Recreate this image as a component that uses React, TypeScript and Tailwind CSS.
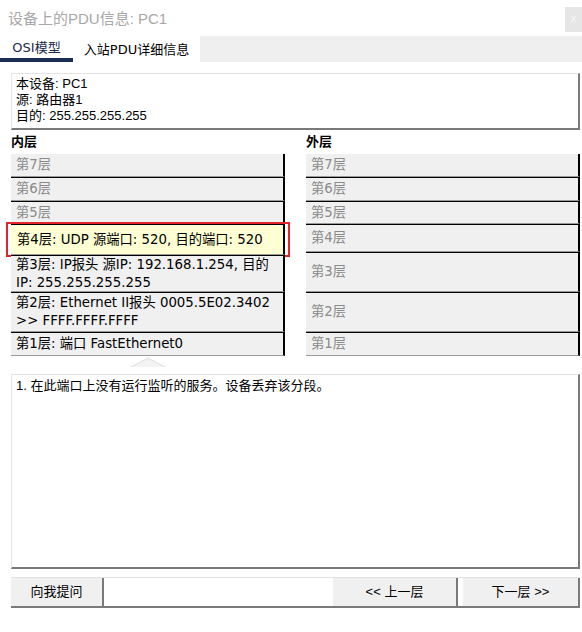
import React from "react";

const cjk = "font-['DejaVu_Sans','Noto_Sans_CJK_SC',sans-serif]";
const arialCjk = "font-['Liberation_Sans','Noto_Sans_CJK_SC',sans-serif]";

interface ILayer {
  label: string;
  h: string;
  active?: boolean;
  first?: boolean;
  highlight?: boolean;
}

const innerLayers: ILayer[] = [
  { label: "第7层", h: "h-[23px]", first: true },
  { label: "第6层", h: "h-[24px]" },
  { label: "第5层", h: "h-[23px]" },
  { label: "第4层: UDP 源端口: 520, 目的端口: 520", h: "h-[31px]", active: true, highlight: true },
  { label: "第3层: IP报头 源IP: 192.168.1.254, 目的 IP: 255.255.255.255", h: "h-[37px]", active: true },
  { label: "第2层: Ethernet II报头 0005.5E02.3402 >> FFFF.FFFF.FFFF", h: "h-[40px]", active: true },
  { label: "第1层: 端口 FastEthernet0", h: "h-[24px]", active: true },
];

const outerLayers: ILayer[] = [
  { label: "第7层", h: "h-[23px]", first: true },
  { label: "第6层", h: "h-[24px]" },
  { label: "第5层", h: "h-[23px]" },
  { label: "第4层", h: "h-[28px]" },
  { label: "第3层", h: "h-[40px]" },
  { label: "第2层", h: "h-[40px]" },
  { label: "第1层", h: "h-[24px]" },
];

const LayerRow: React.FC<{ layer: ILayer }> = ({ layer }) => {
  return (
    <div
      className={`relative flex items-center pl-[5px] pr-1 border-r-2 border-r-black border-b border-b-[#9a9a9a] ${
        layer.first ? "" : "border-t border-t-black"
      } ${layer.h} ${layer.highlight ? "bg-[#ffffd4] pl-[6px]" : "bg-[#f0f0f0]"}`}
    >
      <span className={`text-[13.3px] leading-[18px] ${layer.active ? "text-black" : "text-[#8a8a8a]"}`}>
        {layer.label}
      </span>
      {/* red selection box */}
      {layer.highlight && (
        <div className="absolute left-[-5px] right-[-7px] top-[-3px] bottom-[-3px] border-2 border-[#e3262b] pointer-events-none" />
      )}
    </div>
  );
};

export default function App() {
  return (
    <div className={`w-[582px] h-[632px] bg-white flex flex-col ${cjk}`}>
      {/* title */}
      <div className="h-[36px] flex justify-between">
        <div className={`pl-2 pt-[8px] text-[15px] text-[#a8a8a8] ${arialCjk}`}>设备上的PDU信息: PC1</div>
        <div className="mt-[7px] w-[17px] h-[25px] bg-[#e6e6e6] flex items-center justify-center text-[#f6f6f6] text-[11px]">
          x
        </div>
      </div>

      {/* tabs */}
      <div className="h-[26px] flex text-[13px]">
        <div className="w-[73px] flex flex-col">
          <div className="flex-1 flex items-center justify-center pt-[2px] text-[#1b2a4a]">OSI模型</div>
          <div className="h-[4px] bg-[#1b2d50]" />
        </div>
        <div className="w-[127px] flex items-center justify-center pt-[1px] text-black">入站PDU详细信息</div>
        <div className="flex-1 bg-[#efefef]" />
      </div>

      {/* device info */}
      <div
        className={`mt-[11px] ml-[11px] mr-[2px] h-[57px] bg-white border border-[#e3e3e3] border-r-2 border-b-2 border-r-[#7a7a7a] border-b-[#7a7a7a] pl-[4px] pt-[2px] text-[13px] leading-[16px] text-black ${arialCjk}`}
      >
        <div>本设备: PC1</div>
        <div>源: 路由器1</div>
        <div>目的: 255.255.255.255</div>
      </div>

      {/* layers */}
      <div className="flex ml-[11px] mr-[2px] gap-[21px]">
        <div className="w-[274px] flex flex-col">
          <div className="h-[24px] flex items-end pb-[3px] text-[13px] font-bold text-black">内层</div>
          {innerLayers.map((l) => (
            <LayerRow key={l.label} layer={l} />
          ))}
          <div className="h-[18px] flex justify-center pt-[1px]">
            <svg width="34" height="11" viewBox="0 0 34 11">
              <polygon points="0,10 17,1 34,10" fill="#f3f3f3" />
              <polyline points="0,10 17,1 34,10" fill="none" stroke="#dcdcdc" strokeWidth="1" />
            </svg>
          </div>
        </div>
        <div className="flex-1 flex flex-col">
          <div className="h-[24px] flex items-end pb-[3px] text-[13px] font-bold text-black">外层</div>
          {outerLayers.map((l) => (
            <LayerRow key={l.label} layer={l} />
          ))}
        </div>
      </div>

      {/* message */}
      <div
        className={`ml-[11px] mr-[2px] h-[195px] bg-white border border-[#e3e3e3] border-r-2 border-b-2 border-r-[#7a7a7a] border-b-[#7a7a7a] pl-[4px] pt-[3px] text-[13px] leading-[16px] text-black ${arialCjk}`}
      >
        1. 在此端口上没有运行监听的服务。设备丢弃该分段。
      </div>

      {/* bottom buttons */}
      <div
        className={`mt-[8px] ml-[11px] mr-[2px] h-[31px] flex border-t border-t-[#e3e3e3] border-b-2 border-b-[#7a7a7a] text-[13px] text-black ${arialCjk}`}
      >
        <button className="w-[93px] bg-[#f0f0f0] border-r-2 border-r-[#7a7a7a] flex items-center justify-center">
          向我提问
        </button>
        <div className="flex-1 bg-white" />
        <button className="w-[125px] bg-[#f0f0f0] border-r-2 border-r-[#7a7a7a] flex items-center justify-center">
          &lt;&lt; 上一层
        </button>
        <div className="w-[5px] bg-white" />
        <button className="w-[117px] bg-[#f0f0f0] border-r-2 border-r-[#7a7a7a] flex items-center justify-center">
          下一层 &gt;&gt;
        </button>
      </div>
    </div>
  );
}
